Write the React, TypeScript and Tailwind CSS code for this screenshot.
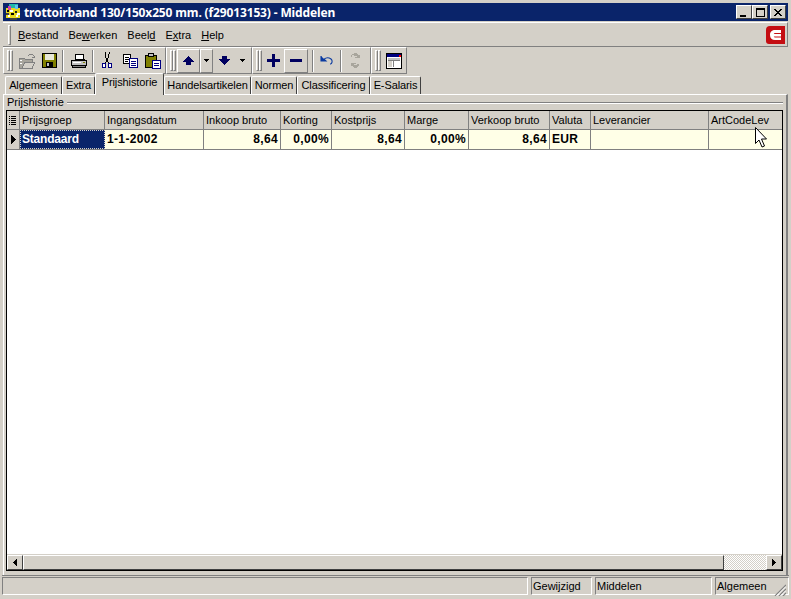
import React from "react";

const raised = "border-t border-l border-t-white border-l-white border-r border-b border-r-[#808080] border-b-[#808080]";

function Grip({ h = "h-[21px]" }: { h?: string }) {
  return <div className={`w-[3px] ${h} border-t border-l border-t-white border-l-white border-r border-b border-r-[#808080] border-b-[#808080] shrink-0`} />;
}
function GripPair() {
  return (
    <div className="flex w-[10px] pl-[3px] shrink-0">
      <Grip />
      <Grip />
    </div>
  );
}
function Sep() {
  return <div className="w-[2px] h-[22px] border-l border-l-[#808080] border-r border-r-white shrink-0" />;
}
function Btn({ w, children, up, down }: { w: string; children?: React.ReactNode; up?: boolean; down?: boolean }) {
  return (
    <div className={`${w} h-[24px] shrink-0 flex items-center justify-center ${up ? raised : ""} ${down ? "border-t border-l border-t-white border-l-white border-r border-b border-r-[#808080] border-b-[#808080]" : ""}`}>
      {children}
    </div>
  );
}
function Svg({ w, h, children }: { w: number; h: number; children: React.ReactNode }) {
  return (
    <svg width={w} height={h} viewBox={`0 0 ${w} ${h}`} shapeRendering="crispEdges" className="block">
      {children}
    </svg>
  );
}

const OpenIcon = () => (
  <Svg w={18} h={16}>
    <path d="M1 5h5l1 1h7v9H1z" fill="#a8a59c" stroke="#808080" />
    <path d="M4 15l3-6h10l-3 6z" fill="#d4d0c8" stroke="#808080" />
    <path d="M2 7h2M2 10h2" stroke="#fff" />
    <path d="M10 3l2-2h2l2 2v2M15 5l-1-1h3z" stroke="#808080" fill="none" />
  </Svg>
);
const SaveIcon = () => (
  <Svg w={15} h={15}>
    <rect x="0.5" y="0.5" width="14" height="14" fill="#808000" stroke="#000" />
    <rect x="3" y="1" width="9" height="6" fill="#e8e8d8" />
    <rect x="4" y="9" width="7" height="5" fill="#000" />
    <rect x="5" y="10" width="2" height="3" fill="#c0c0c0" />
  </Svg>
);
const PrintIcon = () => (
  <Svg w={17} h={15}>
    <path d="M5 1h8l1 5H5z" fill="#fff" stroke="#000" />
    <path d="M1 7h15v5H1z" fill="#c0c0c0" stroke="#000" />
    <path d="M2 12h13v2H2z" fill="#808080" stroke="#000" />
    <path d="M3 9h8" stroke="#fff" />
    <path d="M13 9h2" stroke="#808000" />
  </Svg>
);
const CutIcon = () => (
  <Svg w={10} h={17}>
    <path d="M3 0v2l1 4 1 3M7 0v2L6 6 5 9" stroke="#000" fill="none" />
    <path d="M5 9l-2 2M5 9l2 2" stroke="#000" fill="none" />
    <rect x="0.5" y="11.5" width="3" height="4" fill="#fff" stroke="#000080" />
    <rect x="6.5" y="11.5" width="3" height="4" fill="#fff" stroke="#000080" />
  </Svg>
);
const CopyIcon = () => (
  <Svg w={15} h={14}>
    <rect x="0.5" y="0.5" width="7" height="9" fill="#fff" stroke="#000" />
    <path d="M2 3h4M2 5h4M2 7h3" stroke="#000" />
    <rect x="6.5" y="4.5" width="8" height="9" fill="#fff" stroke="#000080" />
    <path d="M8 7h5M8 9h5M8 11h5" stroke="#000080" />
  </Svg>
);
const PasteIcon = () => (
  <Svg w={16} h={16}>
    <rect x="0.5" y="2.5" width="11" height="12" fill="#808000" stroke="#000" />
    <rect x="3.5" y="0.5" width="5" height="3" fill="#c0c0c0" stroke="#000" />
    <rect x="7.5" y="7.5" width="8" height="8" fill="#fff" stroke="#000080" />
    <path d="M9 10h5M9 12h5" stroke="#000080" />
  </Svg>
);
const UpIcon = () => (
  <Svg w={11} h={10}>
    <path d="M5 0h1v1h1v1h1v1h1v1h1v1h1v1H8v3H3V6H0V5h1V4h1V3h1V2h1V1h1z" fill="#000060" />
  </Svg>
);
const DownIcon = () => (
  <Svg w={11} h={10}>
    <path d="M3 0h5v3h3v1h-1v1H9v1H8v1H7v1H6v1H5V8H4V7H3V6H2V5H1V4H0V3h3z" fill="#000060" />
  </Svg>
);
const Caret = () => (
  <Svg w={5} h={3}>
    <path d="M0 0h5v1H4v1H3v1H2V2H1V1H0z" fill="#000" />
  </Svg>
);
const PlusIcon = () => (
  <Svg w={13} h={13}>
    <path d="M5 0h3v5h5v3H8v5H5V8H0V5h5z" fill="#000060" />
  </Svg>
);
const MinusIcon = () => (
  <Svg w={12} h={3}>
    <rect width="12" height="3" fill="#000060" />
  </Svg>
);
const UndoIcon = () => (
  <svg width="14" height="11" viewBox="0 0 14 11" className="block">
    <path d="M1 1v5h5L4 4.200C6 2.600 9 2.600 11 4c1.800 1.600 1.400 4.200-.8 5.200" fill="none" stroke="#0a3aa0" strokeWidth="1.100" />
    <path d="M1 1v5h5z" fill="#0a3aa0" />
  </svg>
);
const RedoIcon = () => (
  <Svg w={9} h={15}>
    <path d="M3 0h3v1h1v1h2v3H4V4h2V3H3V2H1v2H0V2h1V1h2zM0 10h5v1H3v1h3v-1h2v2H7v1H6v1H3v-1H2v-1H0z" fill="#a8a59c" />
  </Svg>
);
const TableIcon = () => (
  <Svg w={16} h={16}>
    <rect x="0.5" y="0.5" width="15" height="15" fill="#fff" stroke="#000" />
    <rect x="1" y="1" width="14" height="3" fill="#000080" />
    <rect x="13" y="2" width="2" height="2" fill="#ff0000" />
    <rect x="2" y="5" width="12" height="2" fill="#c0c0c0" />
    <rect x="2" y="8" width="4" height="6" fill="#d4d0c8" />
    <path d="M7.5 8v6M2 7.5h12" stroke="#808080" />
  </Svg>
);
const AppIcon = () => (
  <Svg w={16} h={16}>
    <rect x="4" y="0" width="9" height="4" fill="#20b8a8" />
    <rect x="1" y="4" width="14" height="10" fill="#e8d820" />
    <rect x="3" y="2" width="3" height="4" fill="#d040b0" />
    <rect x="10" y="1" width="3" height="4" fill="#60c0f0" />
    <rect x="2" y="6" width="2" height="2" fill="#000" />
    <rect x="6" y="9" width="3" height="2" fill="#000" />
    <rect x="10" y="7" width="2" height="2" fill="#202020" />
    <rect x="3" y="11" width="2" height="2" fill="#fff" />
    <rect x="5" y="6" width="3" height="2" fill="#fff" />
    <rect x="11" y="11" width="2" height="2" fill="#fff" />
    <rect x="1" y="9" width="3" height="2" fill="#404040" />
    <rect x="12" y="9" width="3" height="2" fill="#fff" />
    <rect x="5" y="14" width="7" height="2" fill="#404040" />
  </Svg>
);
const LogoE = () => (
  <svg width="19" height="18" viewBox="0 0 19 18" className="block">
    <path d="M4 0h15v18H3a3 3 0 0 1-3-3V4a4 4 0 0 1 4-4z" fill="#c40d12" />
    <path d="M4 9c0-3.500 2.200-5 5-5h6v3H9.500C8.600 7 8 7.400 7.800 8H15v2.500H7.800c.2.600.8 1 1.700 1H15v2.600H9c-3 0-5-1.800-5-5.100z" fill="#fff" />
  </svg>
);
const Cursor = () => (
  <svg width="13" height="21" viewBox="0 0 13 21" className="block">
    <path d="M.5.5v16l3.500-3.500 3 7 2.500-1-3-7h5z" fill="#fff" stroke="#000" />
  </svg>
);

function WinBtn({ children }: { children: React.ReactNode }) {
  return (
    <div className="w-[16px] h-[14px] bg-[#d4d0c8] border-t border-l border-t-white border-l-white border-r border-b border-r-[#404040] border-b-[#404040] flex items-center justify-center">
      {children}
    </div>
  );
}

const tabs: { t: string; w: string; active?: boolean }[] = [
  { t: "Algemeen", w: "w-[57px]" },
  { t: "Extra", w: "w-[33px]" },
  { t: "Prijshistorie", w: "w-[69px]", active: true },
  { t: "Handelsartikelen", w: "w-[87px]" },
  { t: "Normen", w: "w-[46px]" },
  { t: "Classificering", w: "w-[73px]" },
  { t: "E-Salaris", w: "w-[51px]" },
];

const cols = "grid grid-cols-[13px_85px_99px_77px_51px_73px_64px_81px_41px_118px_73px]";
const headers = ["", "Prijsgroep", "Ingangsdatum", "Inkoop bruto", "Korting", "Kostprijs", "Marge", "Verkoop bruto", "Valuta", "Leverancier", "ArtCodeLev"];
const cells: { t: string; r?: boolean }[] = [
  { t: "1-1-2002" },
  { t: "8,64", r: true },
  { t: "0,00%", r: true },
  { t: "8,64", r: true },
  { t: "0,00%", r: true },
  { t: "8,64", r: true },
  { t: "EUR" },
  { t: "" },
  { t: "" },
];

export default function App() {
  return (
    <div className="w-[791px] h-[599px] bg-[#d4d0c8] overflow-hidden relative flex flex-col text-[11px] leading-[13px] text-black font-['Liberation_Sans',sans-serif] pt-[3px] pb-[2px] px-[3px]">
      {/* title bar */}
      <div className="h-[18px] shrink-0 bg-[#0a246a] flex items-center pl-[2px] pr-[2px] gap-[3px]">
        <AppIcon />
        <span className="text-white font-bold text-[12px] tracking-[-0.14px] font-['Noto_Sans',sans-serif] whitespace-nowrap">trottoirband 130/150x250 mm. (f29013153) - Middelen</span>
        <div className="ml-auto flex items-center">
          <WinBtn>
            <div className="w-[6px] h-[2px] bg-black mt-[7px] mr-[2px]" />
          </WinBtn>
          <WinBtn>
            <div className="w-[9px] h-[9px] border border-black border-t-2" />
          </WinBtn>
          <div className="w-[2px]" />
          <WinBtn>
            <svg width="8" height="7" viewBox="0 0 8 7" shapeRendering="crispEdges"><path d="M0 0h2v1h1v1h2V1h1V0h2v1H7v1H6v1H5v1h1v1h1v1h1v1H6V6H5V5H3v1H2v1H0V6h1V5h1V4h1V3H2V2H1V1H0z" /></svg>
          </WinBtn>
        </div>
      </div>

      {/* menu bar */}
      <div className="h-[25px] mt-[1px] shrink-0 flex items-center pl-[5px] pr-[2px] border-t border-t-white border-b border-b-[#808080] border-r border-r-[#808080]">
        <div className="flex mr-[7px]">
          <Grip h="h-[20px]" />
        </div>
        <span className="mr-[10px] mt-[1px]"><u>B</u>estand</span>
        <span className="mr-[10px] mt-[1px]">Be<u>w</u>erken</span>
        <span className="mr-[10px] mt-[1px]">Beel<u>d</u></span>
        <span className="mr-[10px] mt-[1px]">E<u>x</u>tra</span>
        <span className="mt-[1px]"><u>H</u>elp</span>
        <div className="ml-auto"><LogoE /></div>
      </div>

      {/* toolbar */}
      <div className="h-[27px] shrink-0 flex items-stretch">
        <div className={`${raised} w-[163px] flex items-center`}>
          <GripPair />
          <Btn w="w-[25px]"><OpenIcon /></Btn>
          <Btn w="w-[21px]"><SaveIcon /></Btn>
          <div className="w-[2px]" />
          <Sep />
          <Btn w="w-[28px]"><PrintIcon /></Btn>
          <Sep />
          <Btn w="w-[26px]"><CutIcon /></Btn>
          <Btn w="w-[20px]"><CopyIcon /></Btn>
          <Btn w="w-[25px]"><PasteIcon /></Btn>
        </div>
        <div className={`${raised} w-[86px] flex items-center`}>
          <GripPair />
          <Btn w="w-[23px]" down><UpIcon /></Btn>
          <Btn w="w-[13px]" down><Caret /></Btn>
          <Btn w="w-[22px]"><DownIcon /></Btn>
          <Btn w="w-[14px]"><Caret /></Btn>
        </div>
        <div className={`${raised} w-[119px] flex items-center`}>
          <GripPair />
          <Btn w="w-[21px]"><PlusIcon /></Btn>
          <Btn w="w-[24px]" down><MinusIcon /></Btn>
          <div className="w-[4px]" />
          <Sep />
          <Btn w="w-[26px]"><UndoIcon /></Btn>
          <Sep />
          <Btn w="w-[26px]"><RedoIcon /></Btn>
        </div>
        <div className={`${raised} w-[36px] flex items-center`}>
          <GripPair />
          <Btn w="w-[24px]"><TableIcon /></Btn>
        </div>
      </div>

      {/* tabs */}
      <div className="h-[20px] shrink-0 flex items-end pl-[2px] relative z-10">
        {tabs.map((t) => (
          <div
            key={t.t}
            className={`${t.w} shrink-0 border-l border-t border-l-white border-t-white border-r border-r-[#404040] rounded-t-[2px] flex justify-center whitespace-nowrap tracking-[-0.1px] ${
              t.active ? "h-[22px] pt-[2px] bg-[#d4d0c8] -mb-[1px]" : "h-[18px] pt-[2px]"
            }`}
          >
            {t.t}
          </div>
        ))}
      </div>

      {/* page */}
      <div className="flex-1 min-h-0 flex flex-col border-t border-t-white border-l border-l-white border-r-2 border-r-[#808080] pl-[2px] pr-[3px]">
        {/* group caption */}
        <div className="h-[15px] shrink-0 flex items-center gap-[3px] pl-[1px]">
          <span className="whitespace-nowrap">Prijshistorie</span>
          <div className="flex-1 h-[2px] border-t border-t-[#808080] border-b border-b-white" />
        </div>

        {/* grid */}
        <div className="h-[461px] shrink-0 bg-white border border-black flex flex-col overflow-hidden">
          <div className={`${cols} h-[19px] shrink-0 bg-[#d4d0c8] border-b border-b-[#808080]`}>
            {headers.map((h, i) => (
              <div key={i} className={`pl-[2px] pt-[1px] whitespace-nowrap overflow-hidden flex items-center border-r border-r-[#808080] ${i === 10 ? "border-r-0" : ""}`}>
                {i === 0 ? (
                  <Svg w={7} h={9}>
                    <path d="M0 0h1v1H0zM0 2h1v1H0zM0 4h1v1H0zM0 6h1v1H0zM0 8h1v1H0zM2 0h5v1H2zM2 2h5v1H2zM2 4h5v1H2zM2 6h5v1H2zM2 8h5v1H2z" fill="#000" />
                  </Svg>
                ) : h}
              </div>
            ))}
          </div>
          <div className={`${cols} h-[20px] shrink-0 bg-[#ffffe7] border-b border-b-[#808080] font-bold text-[12px] tracking-[0.35px]`}>
            <div className="bg-[#d4d0c8] border-r border-r-[#808080] flex items-center justify-center">
              <Svg w={5} h={9}>
                <path d="M0 0h1v1h1v1h1v1h1v1h1v1H4v1H3v1H2v1H1v1H0z" fill="#000" />
              </Svg>
            </div>
            <div className="bg-[#0a246a] text-white pl-[2px] flex items-center tracking-[-0.2px] outline-1 -outline-offset-1 outline-dotted outline-[#d4d0c8]">Standaard</div>
            {cells.map((c, i) => (
              <div key={i} className={`px-[2px] flex items-center border-r border-r-[#808080] whitespace-nowrap ${c.r ? "justify-end" : ""} ${i === 8 ? "border-r-0" : ""}`}>{c.t}</div>
            ))}
          </div>
          <div className="flex-1" />
          {/* scrollbar */}
          <div className="h-[16px] shrink-0 flex border-t border-t-[#d4d0c8]">
            <div className="w-[16px] bg-[#d4d0c8] border-t border-l border-t-white border-l-white border-r border-b border-r-[#404040] border-b-[#404040] flex items-center justify-center shrink-0">
              <Svg w={4} h={7}><path d="M3 0h1v7H3V6H2V5H1V4H0V3h1V2h1V1h1z" fill="#000" /></Svg>
            </div>
            <div className="w-[701px] shrink-0 bg-[#d4d0c8] border-t border-l border-t-white border-l-white border-r border-b border-r-[#404040] border-b-[#404040]" />
            <div className="flex-1 bg-[repeating-conic-gradient(#d4d0c8_0_25%,#ffffff_0_50%)] bg-[length:2px_2px]" />
            <div className="w-[16px] bg-[#d4d0c8] border-t border-l border-t-white border-l-white border-r border-b border-r-[#404040] border-b-[#404040] flex items-center justify-center shrink-0">
              <Svg w={4} h={7}><path d="M0 0h1v1h1v1h1v1h1v1H3v1H2v1H1v1H0z" fill="#000" /></Svg>
            </div>
          </div>
        </div>
        <div className="flex-1" />
      </div>

      {/* status bar */}
      <div className="h-[22px] shrink-0 border-t border-t-[#808080] pt-[1px] flex gap-[3px] -mx-[1px]">
        {[
          { t: "", w: "w-[526px]" },
          { t: "Gewijzigd", w: "w-[61px]" },
          { t: "Middelen", w: "w-[117px]" },
          { t: "Algemeen", w: "flex-1" },
        ].map((s) => (
          <div key={s.t} className={`${s.w} h-[18px] border-t border-l border-t-[#808080] border-l-[#808080] border-r border-b border-r-white border-b-white pl-[1px] flex items-center whitespace-nowrap`}>
            {s.t}
          </div>
        ))}
      </div>

      {/* resize grip */}
      <svg width="12" height="12" viewBox="0 0 12 12" className="absolute right-[5px] bottom-[3px]">
        <path d="M12 1L1 12M12 5L5 12M12 9L9 12" stroke="#808080" strokeWidth="1.200" fill="none" />
        <path d="M12 2.500L2.500 12M12 6.500L6.500 12" stroke="#fff" strokeWidth="1" fill="none" />
      </svg>

      {/* mouse cursor */}
      <div className="absolute left-[755px] top-[127px]"><Cursor /></div>
    </div>
  );
}
